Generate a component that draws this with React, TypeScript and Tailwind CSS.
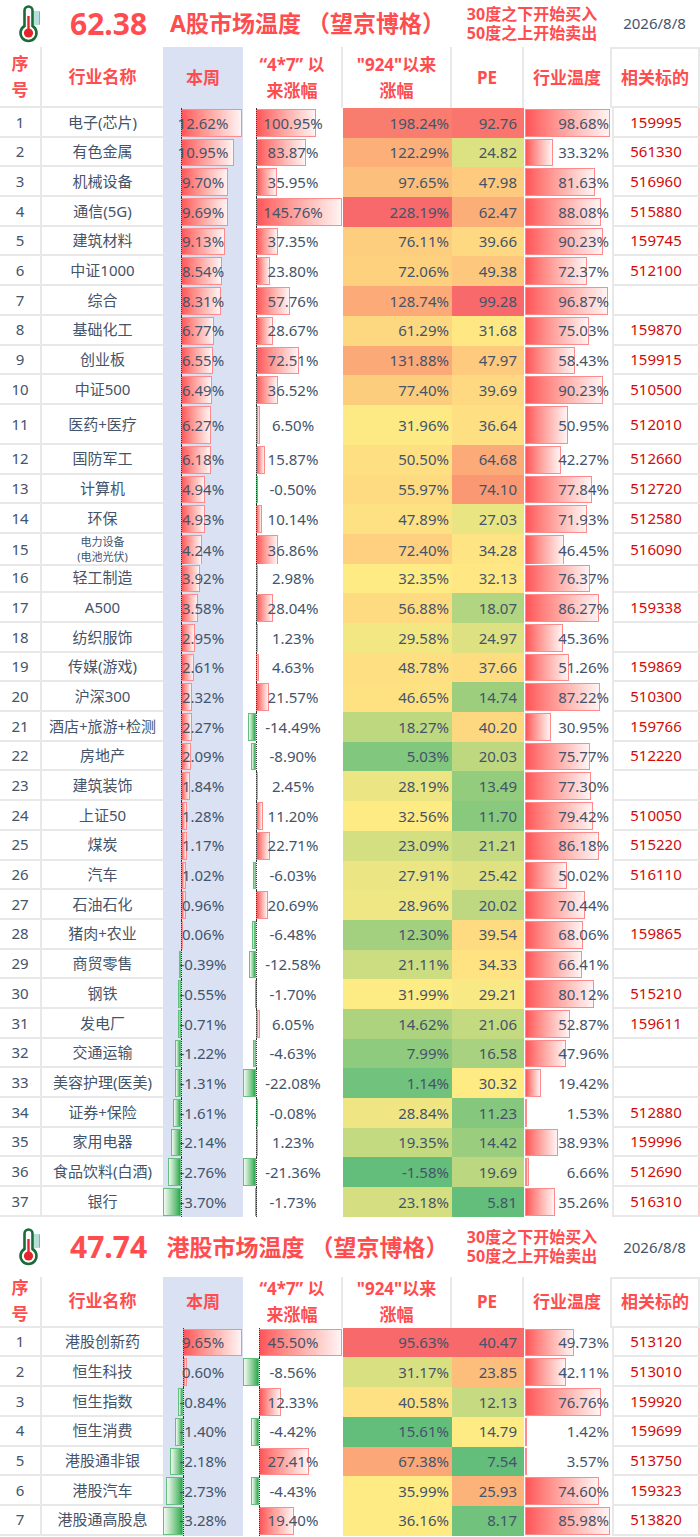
import React from 'react';

type Row = {
  no: number;
  name: string;
  sub?: string;
  week: number;
  s47: number;
  s924: number;
  pe: number;
  temp: number;
  code?: string;
  tall?: boolean;
};

const aRows: Row[] = [
  { no: 1, name: '电子(芯片)', week: 12.62, s47: 100.95, s924: 198.24, pe: 92.76, temp: 98.68, code: '159995' },
  { no: 2, name: '有色金属', week: 10.95, s47: 83.87, s924: 122.29, pe: 24.82, temp: 33.32, code: '561330' },
  { no: 3, name: '机械设备', week: 9.7, s47: 35.95, s924: 97.65, pe: 47.98, temp: 81.63, code: '516960' },
  { no: 4, name: '通信(5G)', week: 9.69, s47: 145.76, s924: 228.19, pe: 62.47, temp: 88.08, code: '515880' },
  { no: 5, name: '建筑材料', week: 9.13, s47: 37.35, s924: 76.11, pe: 39.66, temp: 90.23, code: '159745' },
  { no: 6, name: '中证1000', week: 8.54, s47: 23.8, s924: 72.06, pe: 49.38, temp: 72.37, code: '512100' },
  { no: 7, name: '综合', week: 8.31, s47: 57.76, s924: 128.74, pe: 99.28, temp: 96.87 },
  { no: 8, name: '基础化工', week: 6.77, s47: 28.67, s924: 61.29, pe: 31.68, temp: 75.03, code: '159870' },
  { no: 9, name: '创业板', week: 6.55, s47: 72.51, s924: 131.88, pe: 47.97, temp: 58.43, code: '159915' },
  { no: 10, name: '中证500', week: 6.49, s47: 36.52, s924: 77.4, pe: 39.69, temp: 90.23, code: '510500' },
  { no: 11, name: '医药+医疗', week: 6.27, s47: 6.5, s924: 31.96, pe: 36.64, temp: 50.95, code: '512010', tall: true },
  { no: 12, name: '国防军工', week: 6.18, s47: 15.87, s924: 50.5, pe: 64.68, temp: 42.27, code: '512660' },
  { no: 13, name: '计算机', week: 4.94, s47: -0.5, s924: 55.97, pe: 74.1, temp: 77.84, code: '512720' },
  { no: 14, name: '环保', week: 4.93, s47: 10.14, s924: 47.89, pe: 27.03, temp: 71.93, code: '512580' },
  { no: 15, name: '电力设备', sub: '(电池光伏)', week: 4.24, s47: 36.86, s924: 72.4, pe: 34.28, temp: 46.45, code: '516090' },
  { no: 16, name: '轻工制造', week: 3.92, s47: 2.98, s924: 32.35, pe: 32.13, temp: 76.37 },
  { no: 17, name: 'A500', week: 3.58, s47: 28.04, s924: 56.88, pe: 18.07, temp: 86.27, code: '159338' },
  { no: 18, name: '纺织服饰', week: 2.95, s47: 1.23, s924: 29.58, pe: 24.97, temp: 45.36 },
  { no: 19, name: '传媒(游戏)', week: 2.61, s47: 4.63, s924: 48.78, pe: 37.66, temp: 51.26, code: '159869' },
  { no: 20, name: '沪深300', week: 2.32, s47: 21.57, s924: 46.65, pe: 14.74, temp: 87.22, code: '510300' },
  { no: 21, name: '酒店+旅游+检测', week: 2.27, s47: -14.49, s924: 18.27, pe: 40.2, temp: 30.95, code: '159766' },
  { no: 22, name: '房地产', week: 2.09, s47: -8.9, s924: 5.03, pe: 20.03, temp: 75.77, code: '512220' },
  { no: 23, name: '建筑装饰', week: 1.84, s47: 2.45, s924: 28.19, pe: 13.49, temp: 77.3 },
  { no: 24, name: '上证50', week: 1.28, s47: 11.2, s924: 32.56, pe: 11.7, temp: 79.42, code: '510050' },
  { no: 25, name: '煤炭', week: 1.17, s47: 22.71, s924: 23.09, pe: 21.21, temp: 86.18, code: '515220' },
  { no: 26, name: '汽车', week: 1.02, s47: -6.03, s924: 27.91, pe: 25.42, temp: 50.02, code: '516110' },
  { no: 27, name: '石油石化', week: 0.96, s47: 20.69, s924: 28.96, pe: 20.02, temp: 70.44 },
  { no: 28, name: '猪肉+农业', week: 0.06, s47: -6.48, s924: 12.3, pe: 39.54, temp: 68.06, code: '159865' },
  { no: 29, name: '商贸零售', week: -0.39, s47: -12.58, s924: 21.11, pe: 34.33, temp: 66.41 },
  { no: 30, name: '钢铁', week: -0.55, s47: -1.7, s924: 31.99, pe: 29.21, temp: 80.12, code: '515210' },
  { no: 31, name: '发电厂', week: -0.71, s47: 6.05, s924: 14.62, pe: 21.06, temp: 52.87, code: '159611' },
  { no: 32, name: '交通运输', week: -1.22, s47: -4.63, s924: 7.99, pe: 16.58, temp: 47.96 },
  { no: 33, name: '美容护理(医美)', week: -1.31, s47: -22.08, s924: 1.14, pe: 30.32, temp: 19.42 },
  { no: 34, name: '证券+保险', week: -1.61, s47: -0.08, s924: 28.84, pe: 11.23, temp: 1.53, code: '512880' },
  { no: 35, name: '家用电器', week: -2.14, s47: 1.23, s924: 19.35, pe: 14.42, temp: 38.93, code: '159996' },
  { no: 36, name: '食品饮料(白酒)', week: -2.76, s47: -21.36, s924: -1.58, pe: 19.69, temp: 6.66, code: '512690' },
  { no: 37, name: '银行', week: -3.7, s47: -1.73, s924: 23.18, pe: 5.81, temp: 35.26, code: '516310' },
];

const hkRows: Row[] = [
  { no: 1, name: '港股创新药', week: 9.65, s47: 45.5, s924: 95.63, pe: 40.47, temp: 49.73, code: '513120' },
  { no: 2, name: '恒生科技', week: 0.6, s47: -8.56, s924: 31.17, pe: 23.85, temp: 42.11, code: '513010' },
  { no: 3, name: '恒生指数', week: -0.84, s47: 12.33, s924: 40.58, pe: 12.13, temp: 76.76, code: '159920' },
  { no: 4, name: '恒生消费', week: -1.4, s47: -4.42, s924: 15.61, pe: 14.79, temp: 1.42, code: '159699' },
  { no: 5, name: '港股通非银', week: -2.18, s47: 27.41, s924: 67.38, pe: 7.54, temp: 3.57, code: '513750' },
  { no: 6, name: '港股汽车', week: -2.73, s47: -4.43, s924: 35.99, pe: 25.93, temp: 74.6, code: '159323' },
  { no: 7, name: '港股通高股息', week: -3.28, s47: 19.4, s924: 36.16, pe: 8.17, temp: 85.98, code: '513820' },
];

const GRID = 'grid grid-cols-[42px_121px_80px_100px_109px_72px_88px_88px]';
const LINE = 'border-[#e8e8e8]';

const GREEN = [99, 190, 123];
const YELLOW = [255, 235, 132];
const RED = [248, 105, 107];

function mix(a: number[], b: number[], t: number) {
  const c = a.map((x, i) => Math.round(x + (b[i] - x) * t));
  return `rgb(${c[0]},${c[1]},${c[2]})`;
}

function median(xs: number[]) {
  const s = [...xs].sort((a, b) => a - b);
  const m = Math.floor(s.length / 2);
  return s.length % 2 ? s[m] : (s[m - 1] + s[m]) / 2;
}

// excel style 3 colour scale: min green, median yellow, max red
function scaleColor(v: number, xs: number[]) {
  const min = Math.min(...xs);
  const max = Math.max(...xs);
  const mid = median(xs);
  if (v <= mid) return mix(GREEN, YELLOW, mid === min ? 1 : (v - min) / (mid - min));
  return mix(YELLOW, RED, (v - mid) / (max - mid));
}

const pct = (v: number) => `${v.toFixed(2)}%`;

function Thermo() {
  return (
    <svg width="30" height="40" viewBox="0 0 30 40">
      {[8, 10, 12, 14, 16, 18, 20].map((y) => (
        <line key={y} x1="20" x2="26" y1={y} y2={y} stroke="#5cb8b0" strokeWidth="0.9" />
      ))}
      <line x1="25.5" x2="25.5" y1="7.5" y2="20.5" stroke="#5cb8b0" strokeWidth="0.9" />
      <path
        d="M10.5 22 V6.5 a4 4 0 0 1 8 0 V22 A8 8 0 1 1 10.5 22 Z"
        fill="white"
        stroke="#1b6b3a"
        strokeWidth="2.6"
      />
      <line x1="14.5" x2="14.5" y1="12" y2="28" stroke="#e3262b" strokeWidth="2.4" />
      <circle cx="14.5" cy="29" r="4.6" fill="#e3262b" />
    </svg>
  );
}

function TitleBar({ value, title, h }: { value: string; title: string; h: string }) {
  return (
    <div className={`flex items-center ${h}`}>
      <div className="flex w-[57px] justify-center">
        <Thermo />
      </div>
      <div className="w-[103px] pl-[13px] text-[30px] font-bold leading-none text-[#ff4d4f]">{value}</div>
      <div className="w-[295px] text-center text-[23px] font-bold text-[#ff4d4f]">{title} （望京博格）</div>
      <div className="w-[154px] text-center text-[16px] font-bold leading-[19px] text-[#ff4d4f]">
        <div>30度之下开始买入</div>
        <div>50度之上开始卖出</div>
      </div>
      <div className="flex-1 text-center text-[15px] text-[#44546a]">2026/8/8</div>
    </div>
  );
}

function Header({ h }: { h: string }) {
  const cell = `flex items-center justify-center text-center text-[17px] font-bold leading-[26px] text-[#ff4d4f] ${h}`;
  return (
    <div className={GRID}>
      <div className={`${cell} border-r-2 border-b-2 ${LINE}`}>
        序<br />号
      </div>
      <div className={`${cell} border-b-2 ${LINE}`}>行业名称</div>
      <div className={`${cell} bg-[#d9e1f2]`}>本周</div>
      <div className={`${cell} border-r-2 ${LINE}`}>
        “4*7”&nbsp;以<br />来涨幅
      </div>
      <div className={`${cell} border-r-2 ${LINE}`}>
        "924"以来<br />涨幅
      </div>
      <div className={`${cell} border-r-2 ${LINE}`}>PE</div>
      <div className={`${cell} border-r-2 ${LINE}`}>行业温度</div>
      <div className={`${cell} border-t-2 border-r-2 border-b-2 ${LINE}`}>相关标的</div>
    </div>
  );
}

function AxisBar({ v, min, max, w, bg }: { v: number; min: number; max: number; w: number; bg: string }) {
  const neg = Math.min(min, 0);
  const axis = neg < 0 ? (-neg / (-neg + max)) * w : 0;
  const positive = v >= 0;
  let left: number;
  let width: number;
  if (positive) {
    left = axis;
    width = (v / max) * (w - axis - 1);
  } else {
    width = (v / neg) * axis;
    left = axis - width;
  }
  return (
    <div className={`relative flex items-center justify-center ${bg}`}>
      <div
        className={`absolute top-[1px] bottom-[1px] border ${
          positive
            ? 'border-[#ff8a8c] bg-linear-to-r from-[#ff5459] to-[#fff4f4]'
            : 'border-[#63c07e] bg-linear-to-l from-[#1faa4f] to-[#f2fbf4]'
        }`}
        style={{ left, width: Math.max(width, 1) }}
      />
      {neg < 0 && (
        <div className="absolute top-0 bottom-0 border-l border-dotted border-[#333]" style={{ left: axis }} />
      )}
      <span className="relative">{pct(v)}</span>
    </div>
  );
}

function TempBar({ v, min, max, w }: { v: number; min: number; max: number; w: number }) {
  const width = ((v - min) / (max - min)) * (w - 3);
  return (
    <div className="relative flex items-center justify-end bg-white pr-[3px]">
      <div
        className="absolute top-[1px] bottom-[1px] left-[1px] border border-[#ff8a8c] bg-linear-to-r from-[#ff5459] to-[#fff4f4]"
        style={{ width: Math.max(width, 1) }}
      />
      <span className="relative">{pct(v)}</span>
    </div>
  );
}

function Table({ rows, headerH }: { rows: Row[]; headerH: string }) {
  const week = rows.map((r) => r.week);
  const s47 = rows.map((r) => r.s47);
  const s924 = rows.map((r) => r.s924);
  const pe = rows.map((r) => r.pe);
  const temp = rows.map((r) => r.temp);
  return (
    <div>
      <Header h={headerH} />
      {rows.map((r) => (
        <div
          key={r.no}
          className={`${GRID} text-[15px] text-[#44546a] ${r.tall ? 'h-[40px]' : 'h-[29.7px]'}`}
        >
          <div className={`flex items-center justify-center border-r-2 border-b-2 ${LINE}`}>{r.no}</div>
          <div className={`flex flex-col items-center justify-center border-b-2 ${LINE}`}>
            {r.sub ? (
              <div className="text-center text-[11px] leading-[15px]">
                <div>{r.name}</div>
                <div>{r.sub}</div>
              </div>
            ) : (
              r.name
            )}
          </div>
          <AxisBar v={r.week} min={Math.min(...week)} max={Math.max(...week)} w={80} bg="bg-[#d9e1f2]" />
          <AxisBar v={r.s47} min={Math.min(...s47)} max={Math.max(...s47)} w={100} bg="bg-white" />
          <div
            className="flex items-center justify-end pr-[3px]"
            style={{ backgroundColor: scaleColor(r.s924, s924) }}
          >
            {pct(r.s924)}
          </div>
          <div className="flex items-center justify-end pr-[7px]" style={{ backgroundColor: scaleColor(r.pe, pe) }}>
            {r.pe.toFixed(2)}
          </div>
          <TempBar v={r.temp} min={Math.min(...temp)} max={Math.max(...temp)} w={88} />
          <div
            className={`flex items-center justify-center border-l-2 border-b-2 ${LINE} border-r-2 border-r-[#f7caca] text-[#d20a0a]`}
          >
            {r.code ?? ''}
          </div>
        </div>
      ))}
    </div>
  );
}

export default function App() {
  return (
    <div className="w-[700px] bg-white font-['Noto_Sans','Noto_Sans_CJK_SC',sans-serif]">
      <TitleBar value="62.38" title="A股市场温度" h="h-[47px]" />
      <Table rows={aRows} headerH="h-[61px]" />
      <TitleBar value="47.74" title="港股市场温度" h="h-[60px]" />
      <Table rows={hkRows} headerH="h-[51px]" />
    </div>
  );
}
